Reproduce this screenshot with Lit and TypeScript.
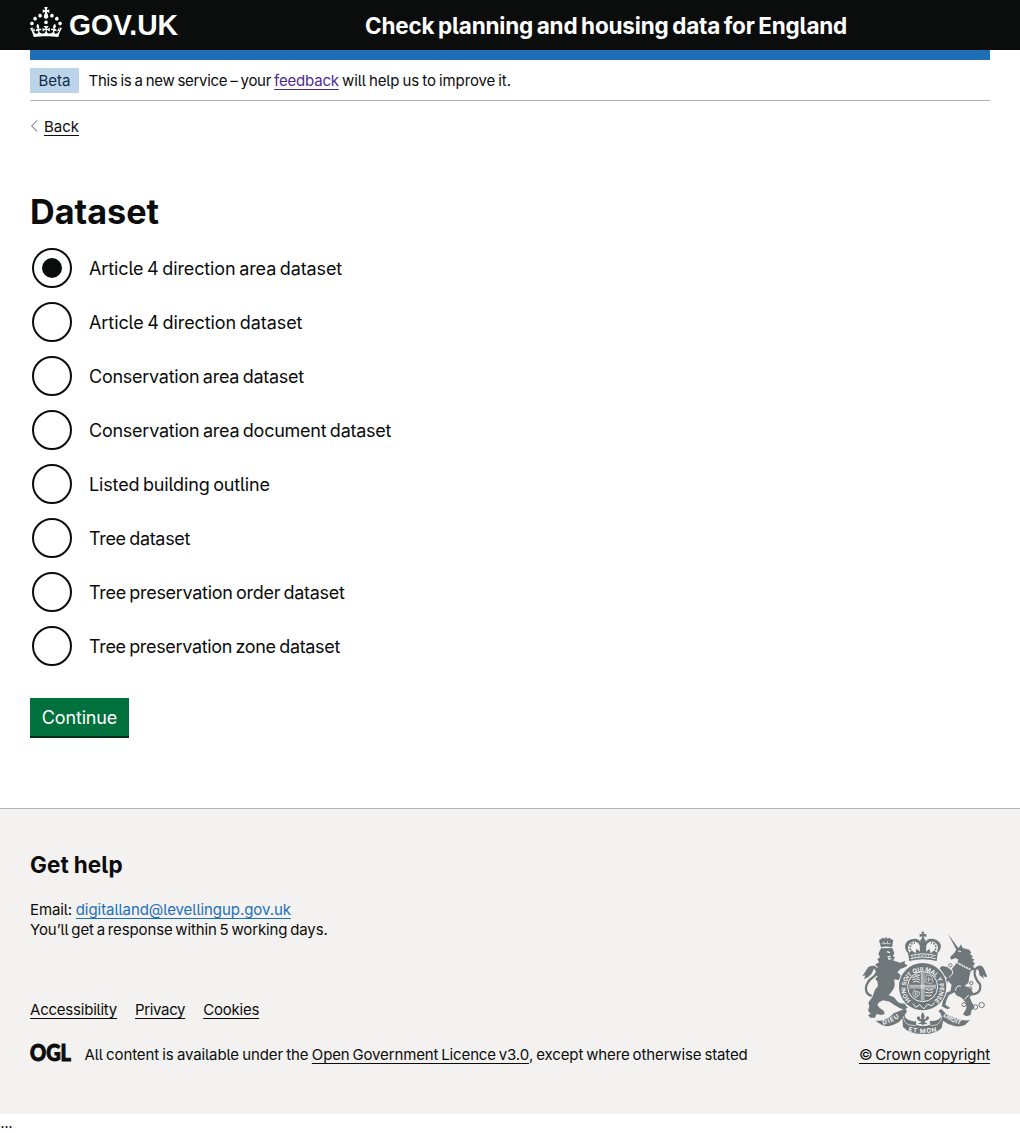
import { LitElement, html, css, svg } from "lit";
import { customElement, state } from "lit/decorators.js";
import { classMap } from "lit/directives/class-map.js";

const crown = svg`<path d="M22.6 10.4c-1 .4-2-.1-2.4-1-.4-.9.1-2 1-2.4.9-.4 2 .1 2.4 1s-.1 2-1 2.4m-5.9 6.7c-.9.4-2-.1-2.4-1-.4-.9.1-2 1-2.4.9-.4 2 .1 2.4 1s-.1 2-1 2.4m10.8-3.7c-1 .4-2-.1-2.4-1-.4-.9.1-2 1-2.4.9-.4 2 .1 2.4 1s0 2-1 2.4m3.3 4.8c-1 .4-2-.1-2.4-1-.4-.9.1-2 1-2.4.9-.4 2 .1 2.4 1s-.1 2-1 2.4M17 4.7l2.3 1.2V2.5l-2.3.7-.2-.2.9-3h-3.4l.9 3-.2.2c-.1.1-2.3-.7-2.3-.7v3.4L15 4.7c.1.1.1.2.2.2l-1.3 4c-.1.2-.1.4-.1.6 0 1.1.8 2 1.9 2.2h.7c1-.2 1.9-1.1 1.9-2.1 0-.2 0-.4-.1-.6l-1.3-4c-.1-.2 0-.2.1-.3m-7.6 5.7c.9.4 2-.1 2.4-1 .4-.9-.1-2-1-2.4-.9-.4-2 .1-2.4 1s0 2 1 2.4m-5 3c.9.4 2-.1 2.4-1 .4-.9-.1-2-1-2.4-.9-.4-2 .1-2.4 1s.1 2 1 2.4m-3.2 4.8c.9.4 2-.1 2.4-1 .4-.9-.1-2-1-2.4-.9-.4-2 .1-2.4 1s0 2 1 2.4m14.8 11c4.4 0 8.6.3 12.3.8 1.1-4.5 2.4-7 3.7-8.8l-2.5-.9c.2 1.3.3 1.9 0 2.7-.4-.4-.8-1.1-1.1-2.3l-1.2 4c.7-.5 1.3-.8 2-.9-1.1 2.5-2.6 3.1-3.5 3-1.1-.2-1.7-1.2-1.5-2.1.3-1.2 1.5-1.5 2.1-.1 1.1-2.3-.8-3-2-2.3 1.9-1.9 2.1-3.5.6-5.6-2.1 1.6-2.1 3.2-1.2 5.5-1.2-1.4-3.2-.6-2.5 1.6.9-1.4 2.1-.5 1.9.8-.2 1.1-1.7 2.1-3.5 1.9-2.7-.2-2.9-2.1-2.9-3.6.7-.1 1.9.5 2.9 1.9l.4-4.3c-1.1 1.1-2.1 1.4-3.2 1.4.4-1.2 2.1-3 2.1-3h-5.4s1.7 1.9 2.1 3c-1.1 0-2.1-.2-3.2-1.4l.4 4.3c1-1.4 2.2-2 2.9-1.9-.1 1.5-.2 3.4-2.9 3.6-1.9.2-3.4-.8-3.5-1.9-.2-1.3 1-2.2 1.9-.8.7-2.3-1.2-3-2.5-1.6.9-2.2.9-3.9-1.2-5.5-1.5 2-1.3 3.7.6 5.6-1.2-.7-3.1 0-2 2.3.6-1.4 1.8-1.1 2.1.1.2.9-.3 1.9-1.5 2.1-.9.2-2.4-.5-3.5-3 .6 0 1.2.3 2 .9l-1.2-4c-.3 1.1-.7 1.9-1.1 2.3-.3-.8-.2-1.4 0-2.7l-2.9.9C1.3 23 2.6 25.5 3.7 30c3.7-.5 7.9-.8 12.3-.8"/>`;

// Label and its tracking in px.
const datasets: [string, number][] = [
  ["Article 4 direction area dataset", -0.11],
  ["Article 4 direction dataset", -0.08],
  ["Conservation area dataset", -0.26],
  ["Conservation area document dataset", -0.25],
  ["Listed building outline", -0.15],
  ["Tree dataset", -0.32],
  ["Tree preservation order dataset", -0.3],
  ["Tree preservation zone dataset", -0.33],
];

@customElement("royal-arms")
class RoyalArms extends LitElement {
  static styles = css`
    :host { display: block; width: 128px; height: 104px; }
    svg { display: block; width: 100%; height: 100%; }
    .ink { fill: #6f777b; }
    .paper { fill: #f3f2f1; }
    .line { fill: none; stroke: #6f777b; }
    .cut { fill: none; stroke: #f3f2f1; }
    .motto { font: 700 18px Inter, sans-serif; fill: #f3f2f1; }
    .scroll { font: 700 19px Inter, sans-serif; fill: #f3f2f1; }
    text { word-spacing: 0; letter-spacing: 0; }
  `;
  render() {
    return html`<svg viewBox="18 18 384 312" aria-hidden="true">
      <defs>
        <path id="ring" d="M168 227A51 51 0 1 1 238 227" />
        <path id="left" d="M84 299Q114 293 138 273" />
        <path id="mid" d="M160 319Q203 330 247 319" />
        <path id="right" d="M264 273Q284 291 322 301" />
      </defs>

      <!-- lion -->
      <g class="ink">
        <path d="M78 67L72 46L78 42Q83 36 91 41L91 37L95 37L96 41Q104 36 109 43L115 46L111 67Q94 62 78 67Z" />
        <path d="M78 70L112 69L118 84L114 93L120 98L114 106L121 109L136 113L150 108L149 116L158 121L150 127L136 132L127 142L140 154L152 160L158 169L148 172L135 166L118 163L119 181Q119 190 111 199L101 211L116 216L128 230L136 235L149 236L158 248L147 254L132 248L117 239L104 230L84 226L72 232L67 239L74 249L86 257L89 267L78 270L65 267L60 278L46 278L39 270L47 266L39 257L43 243L40 233L52 216L60 194L69 183L67 169L61 162L68 153L58 150L67 140L58 134L69 127L60 119L72 112L67 102L75 97L70 86Z" />
      </g>
      <path class="line" stroke-width="7" d="M50 213Q31 207 33 187Q36 169 54 157Q71 143 64 131Q52 121 40 139" />
      <path class="ink" d="M61 123Q42 120 36 132L22 154L31 151L27 163L39 157L50 146L56 133Z" />
      <path class="cut" stroke-width="4" d="M96 80L105 83M98 96L107 94M99 102L109 101" />
      <path class="cut" stroke-width="2" d="M80 56L107 56M84 49L89 56M98 48L96 56" />

      <!-- unicorn -->
      <g class="ink">
        <path d="M279 27L310 69L304 74Z" />
        <path d="M305 72L314 65L318 58L323 69L343 74L349 84L344 87L354 94L349 99L359 104L352 109L360 115L354 124L361 133L347 138L343 155L340 174L329 182L347 190L355 205L344 217L352 235L359 246L349 257L347 270L334 274L324 268L335 249L332 233L320 218L304 211L298 202L281 211L274 227L271 239L286 249L277 253L260 244L265 221L271 204L286 199L290 180L279 167L275 180L265 186L250 184L257 173L267 171L276 158L262 148L254 130L260 123L277 126L288 135L301 119L311 104L301 99L289 104L285 96L298 84Z" />
      </g>
      <path class="line" stroke-width="7" d="M346 208Q380 209 375 178Q352 152 361 133Q372 118 393 155" />
      <path class="ink" d="M362 127Q380 112 389 136L397 157L384 150L387 161L373 150L372 138Z" />
      <path class="cut" stroke-width="5" stroke-dasharray="6 2" d="M299 108Q318 121 348 134" />
      <path class="cut" stroke-width="3" d="M309 78L318 80M289 130L294 144L282 158M318 184Q305 178 301 197M341 210L328 224" />
      <g class="line" stroke-width="3">
        <circle cx="327" cy="239" r="6" /><circle cx="341" cy="253" r="7" />
        <circle cx="361" cy="246" r="7" /><circle cx="380" cy="240" r="8" />
        <circle cx="286" cy="121" r="5" class="paper" />
        <circle cx="349" cy="174" r="5" /><circle cx="346" cy="190" r="5" />
      </g>

      <!-- crown -->
      <path class="ink" d="M199 20L208 20L206 28L214 26L214 36L206 34L208 42Q214 44 211 52Q216 42 227 41Q250 41 257 58Q260 72 248 84L245 108Q203 97 163 108L159 85Q148 75 151 58Q157 42 180 41Q192 42 197 52Q193 44 200 42L202 34L194 36L194 26L201 28Z" />
      <path class="paper" d="M163 83Q154 63 166 54Q184 43 194 61L195 80L185 71L181 85L170 76ZM245 83Q254 63 242 54Q224 43 214 61L213 80L223 71L227 85L238 76Z" />
      <path class="line" stroke-width="5" stroke-dasharray="5 4" d="M167 75Q161 56 180 53M241 75Q247 56 228 53" />
      <path class="cut" stroke-width="3" d="M166 92Q203 81 242 92M167 101Q203 91 242 101" />
      <path class="cut" stroke-width="3" stroke-dasharray="4 6" d="M170 97Q203 86 239 97" />

      <!-- garter and shield -->
      <circle class="paper" cx="203" cy="185" r="74" />
      <circle class="ink" cx="203" cy="185" r="71" />
      <circle class="cut" cx="203" cy="185" r="45" stroke-width="3" />
      <text class="motto"><textPath href="#ring" textLength="244">HONI SOIT QUI MAL Y PENSE</textPath></text>
      <path class="cut" stroke-width="2" d="M203 143V227M163 185H243M199 143V227M207 143V227M163 181H243M163 189H243" />
      <g class="cut" stroke-width="3">
        <path d="M172 158L181 154L193 158M172 164L184 161L195 165M174 172L181 168L194 172M180 150L195 151" />
        <path d="M212 192L224 196L234 192M211 202L224 204L235 200M212 211L222 213L230 210" />
        <path d="M214 148L229 154L235 170L226 176L212 172ZM221 156V170M217 164H229" stroke-width="2" />
        <path d="M176 196Q169 209 180 218Q192 217 194 202ZM181 198V214M186 199V214" stroke-width="2" />
      </g>
      <path class="cut" stroke-width="3" d="M174 236L182 247L194 239L206 252L218 238L231 242L238 232" />

      <!-- motto scroll -->
      <path class="ink" d="M61 287Q95 290 116 265L150 251Q160 258 151 267Q144 277 163 286Q180 292 184 287L183 299Q203 307 226 299L224 288Q250 290 258 276Q261 266 250 258L259 252Q275 271 300 279Q326 289 345 285L330 300Q315 307 298 303Q280 300 264 287L260 309Q239 329 203 327Q164 328 144 306L142 280Q130 298 103 303Q84 305 76 297Z" />
      <path class="cut" stroke-width="2" d="M145 273Q146 295 164 300L183 302M261 272Q259 294 243 300L226 302" />
      <text class="scroll"><textPath href="#left" textLength="54">DIEU</textPath></text>
      <text class="scroll"><textPath href="#mid" textLength="86">ET MON</textPath></text>
      <text class="scroll"><textPath href="#right" textLength="60">DROIT</textPath></text>
      <path class="paper" d="M184 262H223V293Q203 302 184 293Z" />
      <path class="ink" d="M203 261Q213 274 206 282L211 283Q214 270 221 275Q225 283 214 287L209 289L213 296L204 300L195 296L198 289L191 287Q182 281 187 275Q194 271 197 283L201 282Q194 273 203 261Z" />
      <path class="line" stroke-width="3" d="M203 277V290M190 296Q203 291 216 296" />
    </svg>`;
  }
}

@customElement("app-root")
class AppRoot extends LitElement {
  @state() private selected = 0;

  static styles = css`
    :host { display: block; color: #0b0c0c; font-family: Inter, "Open Sans", sans-serif; font-size: 15px; line-height: 20px; font-feature-settings: "cv05"; letter-spacing: -0.12px; word-spacing: -1.3px; }
    * { box-sizing: border-box; }
    .wrap { margin: 0 30px; }
    a { color: #0b0c0c; text-decoration: underline; text-decoration-thickness: 1px; text-underline-offset: 3px; }
    header { background: #0b0c0c; color: #fff; height: 50px; }
    .bar { display: flex; height: 50px; }
    .brand { display: flex; width: 335px; padding-top: 7px; }
    .brand svg { width: 148px; height: 31px; fill: #fff; overflow: visible; }
    .word { font: 700 29.5px "Liberation Sans", Arial, sans-serif; letter-spacing: 0; word-spacing: 0; }
    .service { font-size: 22.5px; font-weight: 700; line-height: 52px; letter-spacing: -0.2px; word-spacing: -1.4px; white-space: nowrap; }
    .stripe { height: 10px; background: #1d70b8; }
    .phase { display: flex; align-items: flex-start; padding-top: 8px; height: 41px; border-bottom: 1px solid #b1b4b6; }
    .tag { width: 49px; height: 25px; line-height: 26px; text-align: center; background: #bbd4ea; color: #0c2d4a; margin-right: 9.5px; letter-spacing: 0.05px; }
    .phase p { margin: 0; line-height: 26px; letter-spacing: -0.12px; word-spacing: -0.9px; }
    .phase .tight { letter-spacing: -0.29px; }
    .phase a { color: #4c2c92; letter-spacing: -0.2px; }
    .back { display: flex; align-items: center; padding-top: 16px; height: 36px; letter-spacing: 0; }
    .back svg { width: 8px; height: 12px; margin: -2px 6px 0 0; fill: none; stroke: #505a5f; }
    main { padding-top: 55px; }
    h1 { margin: 0 0 16px; font-size: 34.2px; line-height: 40px; font-weight: 700; letter-spacing: 0; }
    .list { display: grid; gap: 14px; }
    .item { display: flex; align-items: center; height: 40px; padding-left: 2px; font-size: 18px; line-height: 24px; cursor: pointer; }
    .dot { display: grid; place-items: center; width: 40px; height: 40px; border: 2px solid #0b0c0c; border-radius: 50%; margin-right: 17px; }
    .dot.on::after { content: ""; width: 20px; height: 20px; border-radius: 50%; background: #0b0c0c; }
    .label { padding-top: 1px; }
    button { display: block; margin: 32px 0 70px; width: 99px; height: 40px; padding: 0; border: 0; background: #00703c; box-shadow: inset 0 -2px #002d18; color: #fff; font: 400 18px/38px Inter, sans-serif; font-feature-settings: "cv05"; letter-spacing: -0.15px; }
    footer { height: 306px; background: #f3f2f1; border-top: 1px solid #b1b4b6; padding-top: 41px; }
    h2 { margin: 0; font-size: 22.5px; line-height: 30px; font-weight: 700; letter-spacing: 0.1px; word-spacing: -0.5px; }
    .help { margin: 20px 0 0; }
    .help a { color: #1d70b8; letter-spacing: -0.06px; margin-left: 1px; }
    .foot { display: flex; justify-content: space-between; align-items: flex-end; margin-top: -7px; }
    .links { display: flex; gap: 18px; letter-spacing: -0.22px; }
    .links .tight { letter-spacing: -0.35px; }
    .licence { display: flex; align-items: flex-start; margin-top: 25px; word-spacing: -0.75px; }
    .licence a { word-spacing: -1.3px; }
    .licence .tight { word-spacing: -1.1px; }
    .licence svg { width: 41px; height: 18px; margin: -1px 13.5px 0 0; overflow: visible; }
    .ogl { font: 900 22.5px Lato, Inter, sans-serif; fill: #0b0c0c; stroke: #0b0c0c; stroke-width: 1px; letter-spacing: 0; }
    .copy { display: flex; flex-direction: column; align-items: flex-end; gap: 10px; width: 131px; white-space: nowrap; }
    .copy royal-arms { margin: -2px 1.5px 0 0; }
    .tail { font: 16px/18px "Liberation Serif", serif; letter-spacing: 0; height: 19px; padding-left: 0.6px; }
  `;

  render() {
    return html`
      <header><div class="wrap bar">
        <div class="brand"><svg viewBox="0 0 148 31" role="img" aria-label="GOV.UK">${crown}<text class="word" x="39" y="27.6" textLength="109" lengthAdjust="spacingAndGlyphs">GOV.UK</text></svg></div>
        <div class="service">Check planning and housing data for England</div>
      </div></header>
      <div class="wrap">
        <div class="stripe"></div>
        <div class="phase"><span class="tag">Beta</span><p><span class="tight">This is a new service – your </span><a>feedback</a> will help us to improve it.</p></div>
        <div class="back"><svg viewBox="0 0 8 12"><path d="M7.2 .5L1.6 6L7.2 11.5" /></svg><a>Back</a></div>
        <main>
          <h1>Dataset</h1>
          <div class="list" role="radiogroup">
            ${datasets.map(([name, tracking], i) => html`<div class="item" role="radio" aria-checked=${i === this.selected} @click=${() => (this.selected = i)}>
              <span class=${classMap({ dot: true, on: i === this.selected })}></span><span class="label" style="letter-spacing:${tracking}px">${name}</span></div>`)}
          </div>
          <button>Continue</button>
        </main>
      </div>
      <footer><div class="wrap">
        <h2>Get help</h2>
        <p class="help">Email: <a>digitalland@levellingup.gov.uk</a><br />You’ll get a response within 5 working days.</p>
        <div class="foot">
          <div>
            <div class="links"><a>Accessibility</a><a class="tight">Privacy</a><a>Cookies</a></div>
            <div class="licence"><svg viewBox="0 0 41 18" role="img" aria-label="OGL"><text class="ogl" x="0" y="16.6" textLength="41" lengthAdjust="spacingAndGlyphs">OGL</text></svg><span>All content is available under the <a>Open Government Licence v3.0</a><span class="tight">, except where otherwise stated</span></span></div>
          </div>
          <div class="copy"><royal-arms></royal-arms><a>© Crown copyright</a></div>
        </div>
      </div></footer>
      <div class="tail">...</div>`;
  }
}
